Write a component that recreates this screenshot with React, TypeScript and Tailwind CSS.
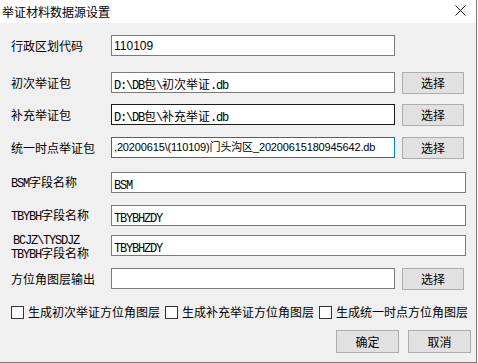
import React from 'react';

const CJK = "font-['Noto_Sans_CJK_SC',sans-serif]";

// SimSun-like text: ascii runs narrowed to half width
const SimText = ({ text }: { text: string }) => {
  const parts = text.split(/([\x00-\x7f]+)/).filter(Boolean);
  return (
    <span className="whitespace-nowrap">
      {parts.map((p, i) =>
        /^[\x00-\x7f]+$/.test(p) ? (
          <span key={i} className="font-['Liberation_Mono',monospace] text-[12px] tracking-[-1.2px]">
            {p}
          </span>
        ) : (
          <span key={i} className={`${CJK} text-[12px]`}>
            {p}
          </span>
        )
      )}
    </span>
  );
};

const Box = ({
  children,
  wide,
  border = 'border-[#7a7a7a]',
}: {
  children?: React.ReactNode;
  wide?: boolean;
  border?: string;
}) => (
  <div
    className={`flex h-[21px] items-center overflow-hidden border bg-white pl-[2px] ${border} ${
      wide ? 'w-[355px]' : 'w-[284px]'
    } self-start`}>
    {children}
  </div>
);

const Btn = ({ label, className = '' }: { label: string; className?: string }) => (
  <button
    className={`flex h-[22px] w-[62px] items-center justify-center border border-[#adadad] bg-[#e1e1e1] text-[12px] text-black ${CJK} ${className}`}>
    {label}
  </button>
);

const Label = ({ children }: { children: React.ReactNode }) => (
  <div className="w-[100px] shrink-0 text-[12px] leading-[14px] text-black">{children}</div>
);

const Check = ({ label }: { label: string }) => (
  <div className="flex items-center gap-[4px]">
    <div className="h-[13px] w-[13px] border border-[#333] bg-white" />
    <span className={`${CJK} text-[12px] leading-[16px] whitespace-nowrap text-black`}>{label}</span>
  </div>
);

export default function App() {
  return (
    <div className="h-[363px] w-[478px] bg-[#fafafa]">
      <div className="flex h-[363px] w-[477px] flex-col border-r border-b border-[#7a7a7a] bg-[#f0f0f0]">
        {/* title bar */}
        <div className="flex h-[23px] shrink-0 items-center justify-between bg-white pl-[2px] pr-[10px]">
          <span className={`${CJK} text-[12px] text-black`}>举证材料数据源设置</span>
          <svg width="11" height="11" viewBox="0 0 11 11" className="mt-[-2px]">
            <path d="M0.5 0.5 L10.5 10.5 M10.5 0.5 L0.5 10.5" stroke="#111" strokeWidth="1" />
          </svg>
        </div>

        <div className="flex flex-col pl-[11px]">
          <div className="mt-[12px] flex h-[22px] items-center">
            <Label>
              <span className={CJK}>行政区划代码</span>
            </Label>
            <Box>
              <span className="font-['Liberation_Sans',sans-serif] text-[12px]">110109</span>
            </Box>
          </div>

          <div className="mt-[15px] flex h-[22px] items-center">
            <Label>
              <span className={CJK}>初次举证包</span>
            </Label>
            <Box>
              <SimText text="D:\DB包\初次举证.db" />
            </Box>
            <Btn label="选择" className="ml-[7px]" />
          </div>

          <div className="mt-[10px] flex h-[22px] items-center">
            <Label>
              <span className={CJK}>补充举证包</span>
            </Label>
            <Box border="border-[#1a1a1a]">
              <SimText text="D:\DB包\补充举证.db" />
            </Box>
            <Btn label="选择" className="ml-[7px]" />
          </div>

          <div className="mt-[11px] flex h-[22px] items-center">
            <Label>
              <span className={CJK}>统一时点举证包</span>
            </Label>
            <Box border="border-[#0078d7]">
              <span className="whitespace-nowrap font-['Liberation_Sans','Noto_Sans_CJK_SC',sans-serif] text-[11px] tracking-[-0.15px]">
                ,20200615\(110109)门头沟区_20200615180945642.db
              </span>
            </Box>
            <Btn label="选择" className="ml-[7px]" />
          </div>

          <div className="mt-[13px] flex h-[22px] items-center">
            <Label>
              <SimText text="BSM字段名称" />
            </Label>
            <Box wide>
              <SimText text="BSM" />
            </Box>
          </div>

          <div className="mt-[11px] flex h-[22px] items-center">
            <Label>
              <SimText text="TBYBH字段名称" />
            </Label>
            <Box wide>
              <SimText text="TBYBHZDY" />
            </Box>
          </div>

          <div className="mt-[8px] flex h-[22px] items-center">
            <Label>
              <div className="flex flex-col gap-[1px]">
                <span className="h-[12px] pl-[2px] leading-[12px]">
                  <SimText text="BCJZ\TYSDJZ" />
                </span>
                <span className="h-[12px] leading-[12px]">
                  <SimText text="TBYBH字段名称" />
                </span>
              </div>
            </Label>
            <Box wide>
              <SimText text="TBYBHZDY" />
            </Box>
          </div>

          <div className="mt-[11px] flex h-[22px] items-center">
            <Label>
              <span className={CJK}>方位角图层输出</span>
            </Label>
            <Box />
            <Btn label="选择" className="ml-[7px]" />
          </div>

          <div className="mt-[14px] flex h-[16px] items-center gap-[5px]">
            <Check label="生成初次举证方位角图层" />
            <Check label="生成补充举证方位角图层" />
            <Check label="生成统一时点方位角图层" />
          </div>

          <div className="mt-[10px] flex justify-end gap-[9px] pr-[5px]">
            <Btn label="确定" className="h-[23px] w-[63px]" />
            <Btn label="取消" className="h-[23px] w-[63px]" />
          </div>
        </div>
      </div>
    </div>
  );
}
